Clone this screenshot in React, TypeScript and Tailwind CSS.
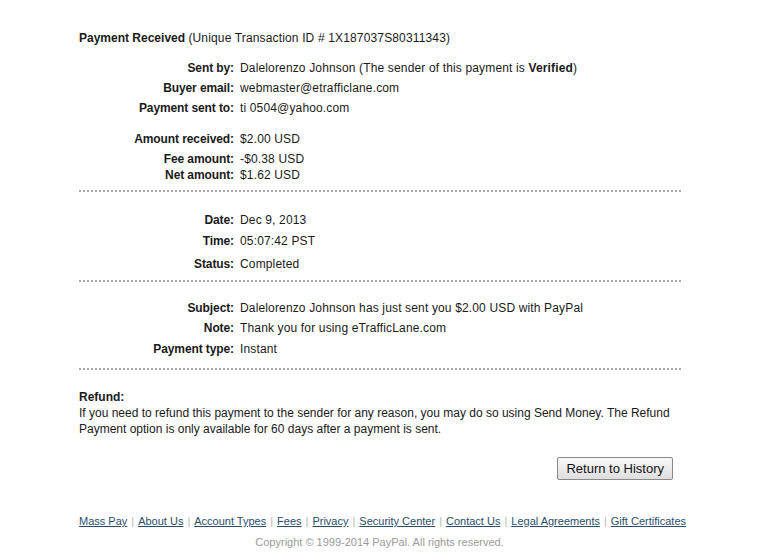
import React from "react";

const Row = ({ label, children, cls = "" }: { label: string; children: React.ReactNode; cls?: string }) => (
  <div className={`grid grid-cols-[155px_1fr] gap-x-[6px] ${cls}`}>
    <div className="text-right font-bold tracking-[-0.1px]">{label}</div>
    <div className="tracking-[0.15px]">{children}</div>
  </div>
);

const Dots = ({ cls = "" }: { cls?: string }) => (
  <div className={`h-0 border-b-2 border-dotted border-[#a8a8a8] ${cls}`} />
);

const links = [
  "Mass Pay",
  "About Us",
  "Account Types",
  "Fees",
  "Privacy",
  "Security Center",
  "Contact Us",
  "Legal Agreements",
  "Gift Certificates",
];

export default function App() {
  return (
    <div
      className="w-[759px] h-[558px] bg-white text-[12px] text-[#1a1a1a] overflow-hidden"
      style={{ fontFamily: '"Liberation Sans", Arial, sans-serif' }}
    >
      <div className="ml-[79px] w-[602px] pt-[28px]">
        <div className="leading-[20px] h-[20px]">
          <span className="font-bold">Payment Received</span>{" "}
          <span className="tracking-[0.15px]">(Unique Transaction ID # 1X187037S80311343)</span>
        </div>
        <div className="leading-[20px]">
          <Row label="Sent by:" cls="mt-[10px] h-[20px]">
            Dalelorenzo Johnson (The sender of this payment is <span className="font-bold">Verified</span>)
          </Row>
          <Row label="Buyer email:" cls="h-[20px]">webmaster@etrafficlane.com</Row>
          <Row label="Payment sent to:" cls="h-[20px]">ti 0504@yahoo.com</Row>
          <Row label="Amount received:" cls="mt-[11px] h-[20px]">$2.00 USD</Row>
        </div>
        <div className="leading-[16px]">
          <Row label="Fee amount:" cls="mt-[2px] h-[16px]">-$0.38 USD</Row>
          <Row label="Net amount:" cls="h-[16px]">$1.62 USD</Row>
        </div>
        <Dots cls="mt-[7px]" />
        <div className="leading-[20px]">
          <Row label="Date:" cls="mt-[18px] h-[20px]">Dec 9, 2013</Row>
          <Row label="Time:" cls="mt-[1px] h-[20px]">05:07:42 PST</Row>
          <Row label="Status:" cls="mt-[3px] h-[20px]">Completed</Row>
        </div>
        <Dots cls="mt-[6px]" />
        <div className="leading-[20px]">
          <Row label="Subject:" cls="mt-[16px] h-[20px]">
            Dalelorenzo Johnson has just sent you $2.00 USD with PayPal
          </Row>
          <Row label="Note:" cls="h-[20px]">Thank you for using eTrafficLane.com</Row>
          <Row label="Payment type:" cls="mt-[1px] h-[20px]">Instant</Row>
        </div>
        <Dots cls="mt-[9px]" />
        <div className="mt-[19px] leading-[16px]">
          <div className="font-bold">Refund:</div>
          <div>
            If you need to refund this payment to the sender for any reason, you may do so using Send Money. The Refund
            Payment option is only available for 60 days after a payment is sent.
          </div>
        </div>
        <div className="mt-[20px] flex justify-end pr-[8px]">
          <button className="h-[23px] px-[8px] border border-[#8a8a8a] rounded-[2px] bg-gradient-to-b from-[#f8f8f8] to-[#dedede] text-[13px] text-[#111] leading-[21px]">
            Return to History
          </button>
        </div>
      </div>
      <div className="mt-[33px] flex justify-center leading-[16px] text-[11px] pl-[6px]">
        {links.map((l, i) => (
          <React.Fragment key={l}>
            {i > 0 && <span className="mx-[4px] text-[#b5b5b5]">|</span>}
            <a className="underline text-[#2c4d6b]">{l}</a>
          </React.Fragment>
        ))}
      </div>
      <div className="mt-[5px] text-center leading-[16px] text-[11px] text-[#9a9a9a]">
        Copyright © 1999-2014 PayPal. All rights reserved.
      </div>
    </div>
  );
}
